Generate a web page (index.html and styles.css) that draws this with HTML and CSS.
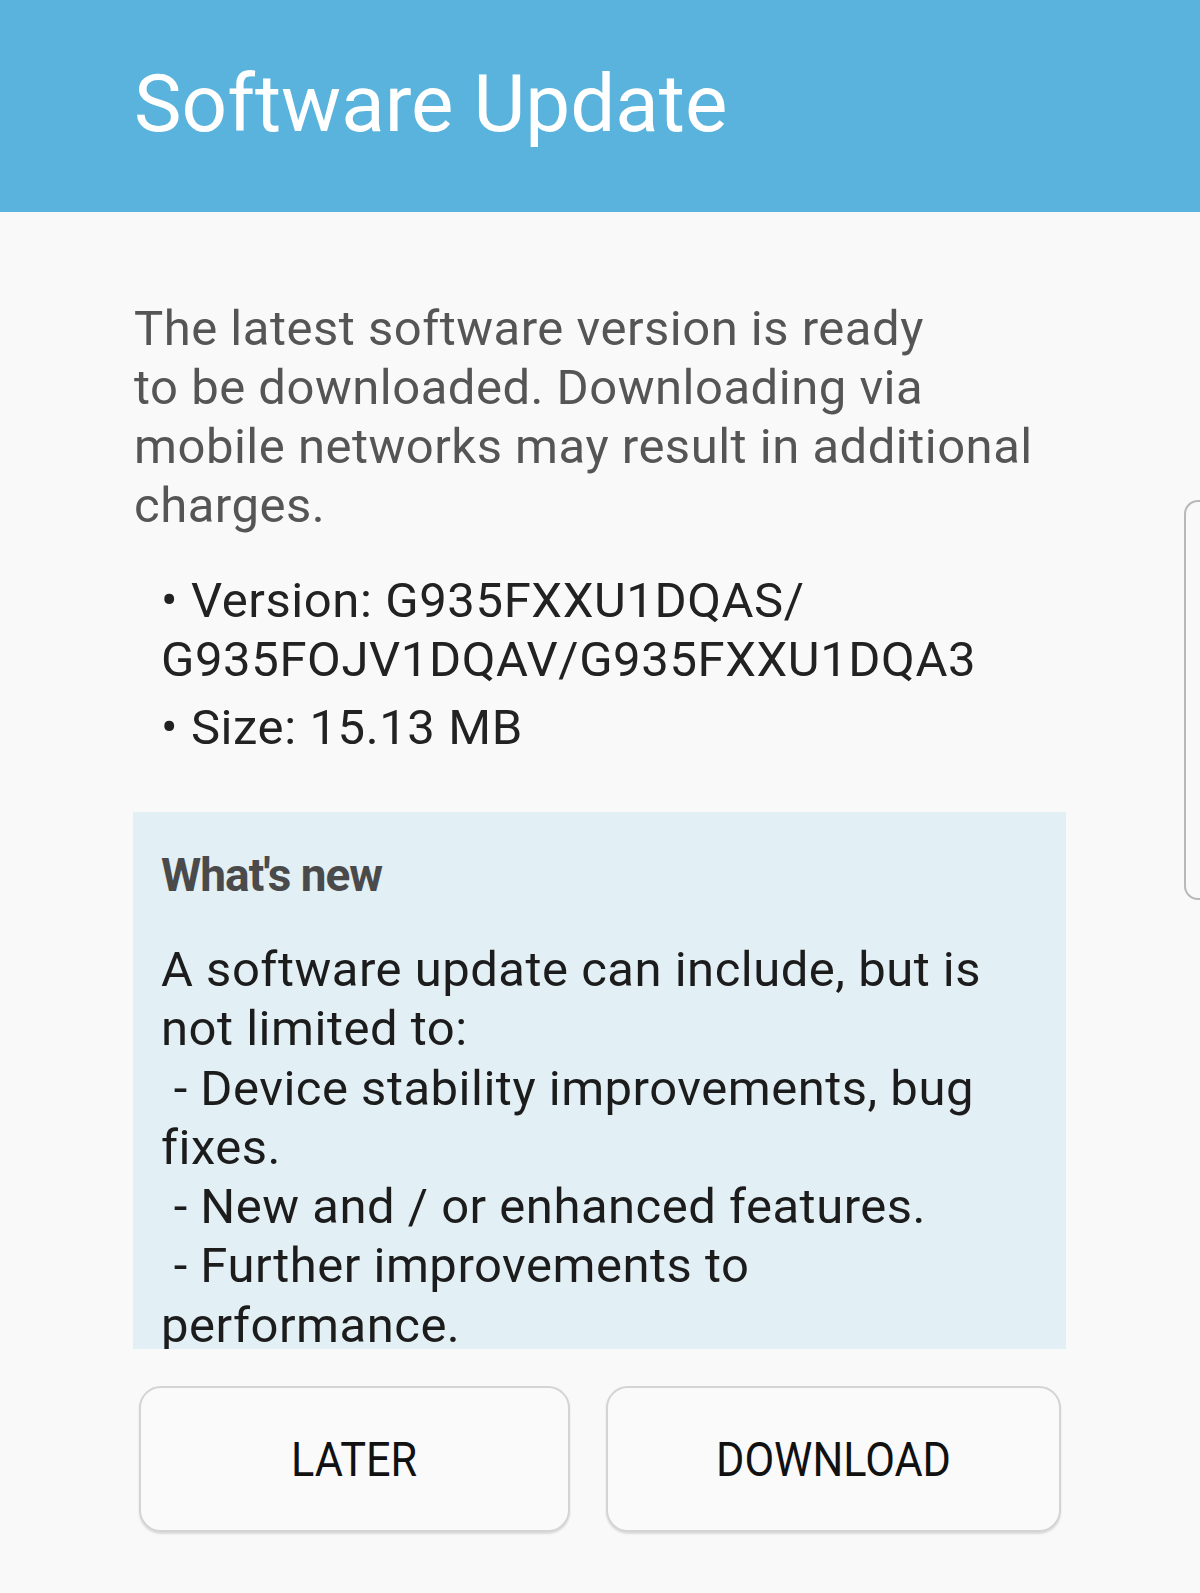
FILE: index.html
```html
<!DOCTYPE html>
<html lang="en">

<head>
    <meta charset="UTF-8">
    <meta name="viewport" content="width=device-width, initial-scale=1.0">
    <title>Software Update</title>
    <link rel="stylesheet" href="styles.css">
</head>

<body>
    <header class="app-bar">
        <h1>Software Update</h1>
    </header>

    <main class="content">
        <p class="intro">The latest software version is ready<br>to be downloaded. Downloading via mobile networks may result in additional charges.</p>

        <ul class="details">
            <li>&bull; Version: G935FXXU1DQAS/<br>G935FOJV1DQAV/G935FXXU1DQA3</li>
            <li>&bull; Size: 15.13 MB</li>
        </ul>

        <section class="whats-new">
            <h2>What's new</h2>
            <p>A software update can include, but is not limited to:<br>&nbsp;- Device stability improvements, bug fixes.<br>&nbsp;- New and / or enhanced features.<br>&nbsp;- Further improvements to performance.</p>
        </section>

        <div class="actions">
            <button type="button"><span>LATER</span></button>
            <button type="button"><span>DOWNLOAD</span></button>
        </div>
    </main>

    <div class="edge-handle"></div>
</body>

</html>
```

FILE: styles.css
```css
body {
    font-family: Roboto, "Noto Sans", sans-serif;
    margin: 0;
    background-color: #f9f9f9;
    min-height: 1593px;
    position: relative;
    overflow: hidden;
}

.app-bar {
    background-color: #59b3dc;
    height: 212px;
    box-sizing: border-box;
    padding: 57px 134px 0;
}

.app-bar h1 {
    margin: 0;
    color: #ffffff;
    font-size: 80px;
    font-weight: 400;
    line-height: normal;
}

.content {
    padding: 0 134px;
}

.intro {
    margin: 87px 0 0;
    font-size: 49px;
    line-height: 59px;
    letter-spacing: 0.5px;
    color: #555555;
}

.details {
    list-style: none;
    margin: 36px 0 0;
    padding: 0 0 0 27px;
    font-size: 49px;
    line-height: 59px;
    letter-spacing: 0.6px;
    color: #222222;
}

.details li + li {
    margin-top: 9px;
}

.whats-new {
    margin: 55px 0 0 -1px;
    height: 537px;
    box-sizing: border-box;
    padding: 35px 28px 0;
    background-color: #e2eff4;
    overflow: hidden;
}

.whats-new h2 {
    margin: 0;
    font-size: 46px;
    line-height: 56px;
    font-weight: 700;
    color: #4a4a4a;
    letter-spacing: -1px;
}

.whats-new p {
    margin: 37px 0 0;
    font-size: 49px;
    line-height: 59.3px;
    letter-spacing: 0.5px;
    color: #1c1c1c;
}

.actions {
    display: grid;
    grid-template-columns: 431fr 455fr;
    gap: 36px;
    margin-top: 37px;
    padding: 0 5px;
}

.actions button {
    height: 146px;
    background-color: #fafafa;
    border: 2px solid #d4d4d4;
    border-radius: 22px;
    box-shadow: 0 2px 2px rgba(0, 0, 0, 0.12);
    font-family: Roboto, "Noto Sans", sans-serif;
    font-size: 48px;
    color: #111111;
    cursor: pointer;
}

.actions button span {
    display: inline-block;
    transform: scaleX(0.9);
}

.edge-handle {
    position: absolute;
    right: 0;
    top: 500px;
    width: 14px;
    height: 396px;
    border: 2px solid #b8b8b8;
    border-right: none;
    border-radius: 14px 0 0 14px;
}
```
